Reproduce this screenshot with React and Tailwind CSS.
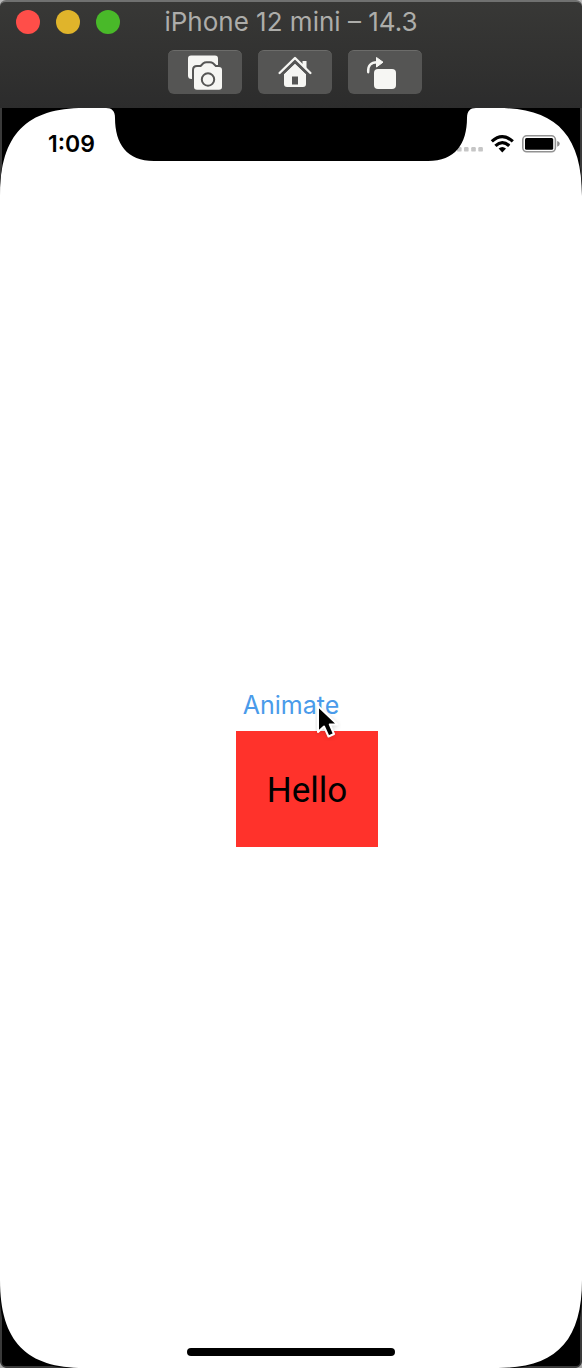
import React from "react";

function CameraIcon() {
  return (
    <svg width="38" height="40" viewBox="0 0 38 40" aria-hidden="true">
      <path d="M5 2.500H29q3 0 3 3V26H5.500q-3.500 0-3.500-3.500V5.500q0-3 3-3Z" fill="#f6f6f3" />
      <path
        d="M11 14h4l3-3q1-.8 2.400-.8h3.600q1.400 0 2.400.8l3 3h3.600q3 0 3 3v17q0 2.800-3 2.800H11q-3 0-3-2.800V17q0-3 3-3Z"
        fill="#f6f6f3"
        stroke="#565655"
        strokeWidth="4"
        paintOrder="stroke"
      />
      <circle cx="22" cy="26.500" r="6.200" fill="none" stroke="#565655" strokeWidth="2" />
    </svg>
  );
}

function HomeIcon() {
  return (
    <svg width="38" height="34" viewBox="0 0 38 34" aria-hidden="true">
      <path d="M26.500 5h4v9l-4-4Z" fill="#f6f6f3" />
      <path d="M8 18 19 7.500 30 18v10q0 3-3 3H11q-3 0-3-3Z" fill="#f6f6f3" />
      <path d="m5 19.500 14-13.500 14 13.500" fill="none" stroke="#565655" strokeWidth="2" />
      <path d="m3.600 17 15.400-15 15.400 15" fill="none" stroke="#f6f6f3" strokeWidth="2.400" strokeLinecap="round" strokeLinejoin="round" />
      <rect x="16" y="20.500" width="6" height="8" fill="#565655" />
    </svg>
  );
}

function RotateIcon() {
  return (
    <svg width="32" height="34" viewBox="0 0 32 34" aria-hidden="true">
      <path d="M3.200 16.200C2.600 9.500 6 6.400 12 6.200" fill="none" stroke="#f6f6f3" strokeWidth="2.400" strokeLinecap="round" />
      <path d="M11.500 1.500 18 6.200 11.500 11Z" fill="#f6f6f3" stroke="#f6f6f3" strokeLinejoin="round" />
      <rect x="9" y="13" width="22" height="20" rx="4" fill="#f6f6f3" />
    </svg>
  );
}

function ToolButton({ label, children }) {
  return (
    <button
      type="button"
      aria-label={label}
      className="flex h-11 w-[74px] items-center justify-center rounded-md border-t border-[#6c6c6a] bg-[#555554]"
    >
      {children}
    </button>
  );
}

function Corner({ className }) {
  return (
    <svg className={className} width="84" height="88" viewBox="0 0 84 88" aria-hidden="true">
      <path d="M0 0H84C27 0 0 26 0 88Z" fill="#000" />
      <path d="M0 0H2V58Q0 70 0 88Z" fill="#3a3a3a" />
    </svg>
  );
}

function BottomCorner({ className }) {
  return (
    <svg className={className} width="84" height="88" viewBox="0 0 84 88" aria-hidden="true">
      <path d="M0 88V0C0 62 27 88 84 88Z" fill="#000" />
      <path d="M0 88V18Q0 26 2 38V82Q2 86 6 86H52Q62 88 76 88Z" fill="#3a3a3a" />
      <path d="M0 82V88H6Q1 87 0 82Z" fill="#a8a8a8" />
    </svg>
  );
}

function Notch() {
  return (
    <svg
      className="absolute top-0 left-1/2 -translate-x-1/2"
      width="370"
      height="54"
      viewBox="0 0 370 54"
      aria-hidden="true"
    >
      <path
        d="M0 0C6 0 9 3 9 10C9 36 21 53 48 53H322C349 53 361 36 361 10C361 3 364 0 370 0Z"
        fill="#000"
      />
    </svg>
  );
}

function StatusIcons() {
  return (
    <svg width="104" height="20" viewBox="0 0 104 20" role="img" aria-label="Signal, Wi-Fi and battery">
      <g fill="#c6c6c6">
        <rect x="1" y="13" width="4.600" height="4.600" rx="1.200" />
        <rect x="8" y="13" width="4.600" height="4.600" rx="1.200" />
        <rect x="15.200" y="13" width="4.600" height="4.600" rx="1.200" />
        <rect x="22.300" y="13" width="4.600" height="4.600" rx="1.200" />
      </g>
      <g fill="none" stroke="#000" strokeWidth="3.200">
        <path d="M35.800 7.400Q46.300-2.200 56.800 7.400" />
        <path d="M39.400 11.800Q46.300 5.400 53.200 11.800" />
      </g>
      <path d="M42.600 14.600Q46.300 11.200 50 14.600L46.300 18.600Z" fill="#000" />
      <rect x="66.800" y="1.800" width="32.600" height="16" rx="4" fill="none" stroke="#929292" strokeWidth="1.600" />
      <rect x="69" y="4" width="28.200" height="11.800" rx="1.500" fill="#000" />
      <path d="M101.200 7Q103.800 7.800 103.800 9.800T101.200 12.800Z" fill="#8c8c8c" />
    </svg>
  );
}

function Pointer() {
  return (
    <svg
      className="pointer-events-none absolute top-4 -right-0.5"
      width="26"
      height="38"
      viewBox="0 0 26 38"
      aria-hidden="true"
    >
      <path
        d="M3 3V29L9 23.500 13.500 33.500 19 31 14.800 21.500H22.500Z"
        fill="#000"
        stroke="#fff"
        strokeWidth="2"
        strokeLinejoin="round"
        className="drop-shadow-sm"
      />
    </svg>
  );
}

export default function App() {
  return (
    <div className="flex min-h-screen flex-col bg-[#b8b8b8] font-[Inter,sans-serif]">
      <header className="flex h-[108px] flex-col rounded-t-md border-t-2 border-[#707170] bg-linear-to-b from-[#383836] to-[#2c2c2c]">
        <div className="relative flex h-10 items-center justify-center">
          <div className="absolute left-4 flex gap-4">
            <button type="button" aria-label="Close" className="size-6 rounded-full bg-[#ff4e49]" />
            <button type="button" aria-label="Minimize" className="size-6 rounded-full bg-[#e0b42b]" />
            <button type="button" aria-label="Zoom" className="size-6 rounded-full bg-[#49b929]" />
          </div>
          <h1 className="text-[26px] leading-8 text-[#adadaa]">iPhone 12 mini – 14.3</h1>
        </div>
        <div className="mt-2 flex justify-center gap-4 pl-2">
          <ToolButton label="Screenshot"><CameraIcon /></ToolButton>
          <ToolButton label="Home"><HomeIcon /></ToolButton>
          <ToolButton label="Rotate">
            <span className="pr-2"><RotateIcon /></span>
          </ToolButton>
        </div>
      </header>

      <div className="relative flex flex-1 flex-col overflow-hidden bg-white">
        <Corner className="absolute top-0 left-0" />
        <Corner className="absolute top-0 right-0 -scale-x-100" />
        <BottomCorner className="absolute bottom-0 left-0" />
        <BottomCorner className="absolute right-0 bottom-0 -scale-x-100" />

        <div className="relative flex h-[72px] items-center justify-between pr-[22px] pl-12">
          <time className="text-[23px] font-semibold">1:09</time>
          <StatusIcons />
          <Notch />
        </div>

        <main className="flex flex-1 flex-col items-center justify-center pt-1.5">
          <div className="relative">
            <button type="button" className="block text-[25px] leading-9 text-[#4a9bea]">
              Animate
            </button>
            <Pointer />
          </div>
          <div className="pt-2 pl-8">
            <div className="flex h-29 w-[142px] items-center justify-center bg-[#ff322b] pt-1 font-[Roboto,sans-serif] text-[35px] text-black">
              Hello
            </div>
          </div>
        </main>

        <div className="flex justify-center pb-3">
          <div className="h-2 w-52 rounded-full bg-black" />
        </div>
      </div>
    </div>
  );
}
